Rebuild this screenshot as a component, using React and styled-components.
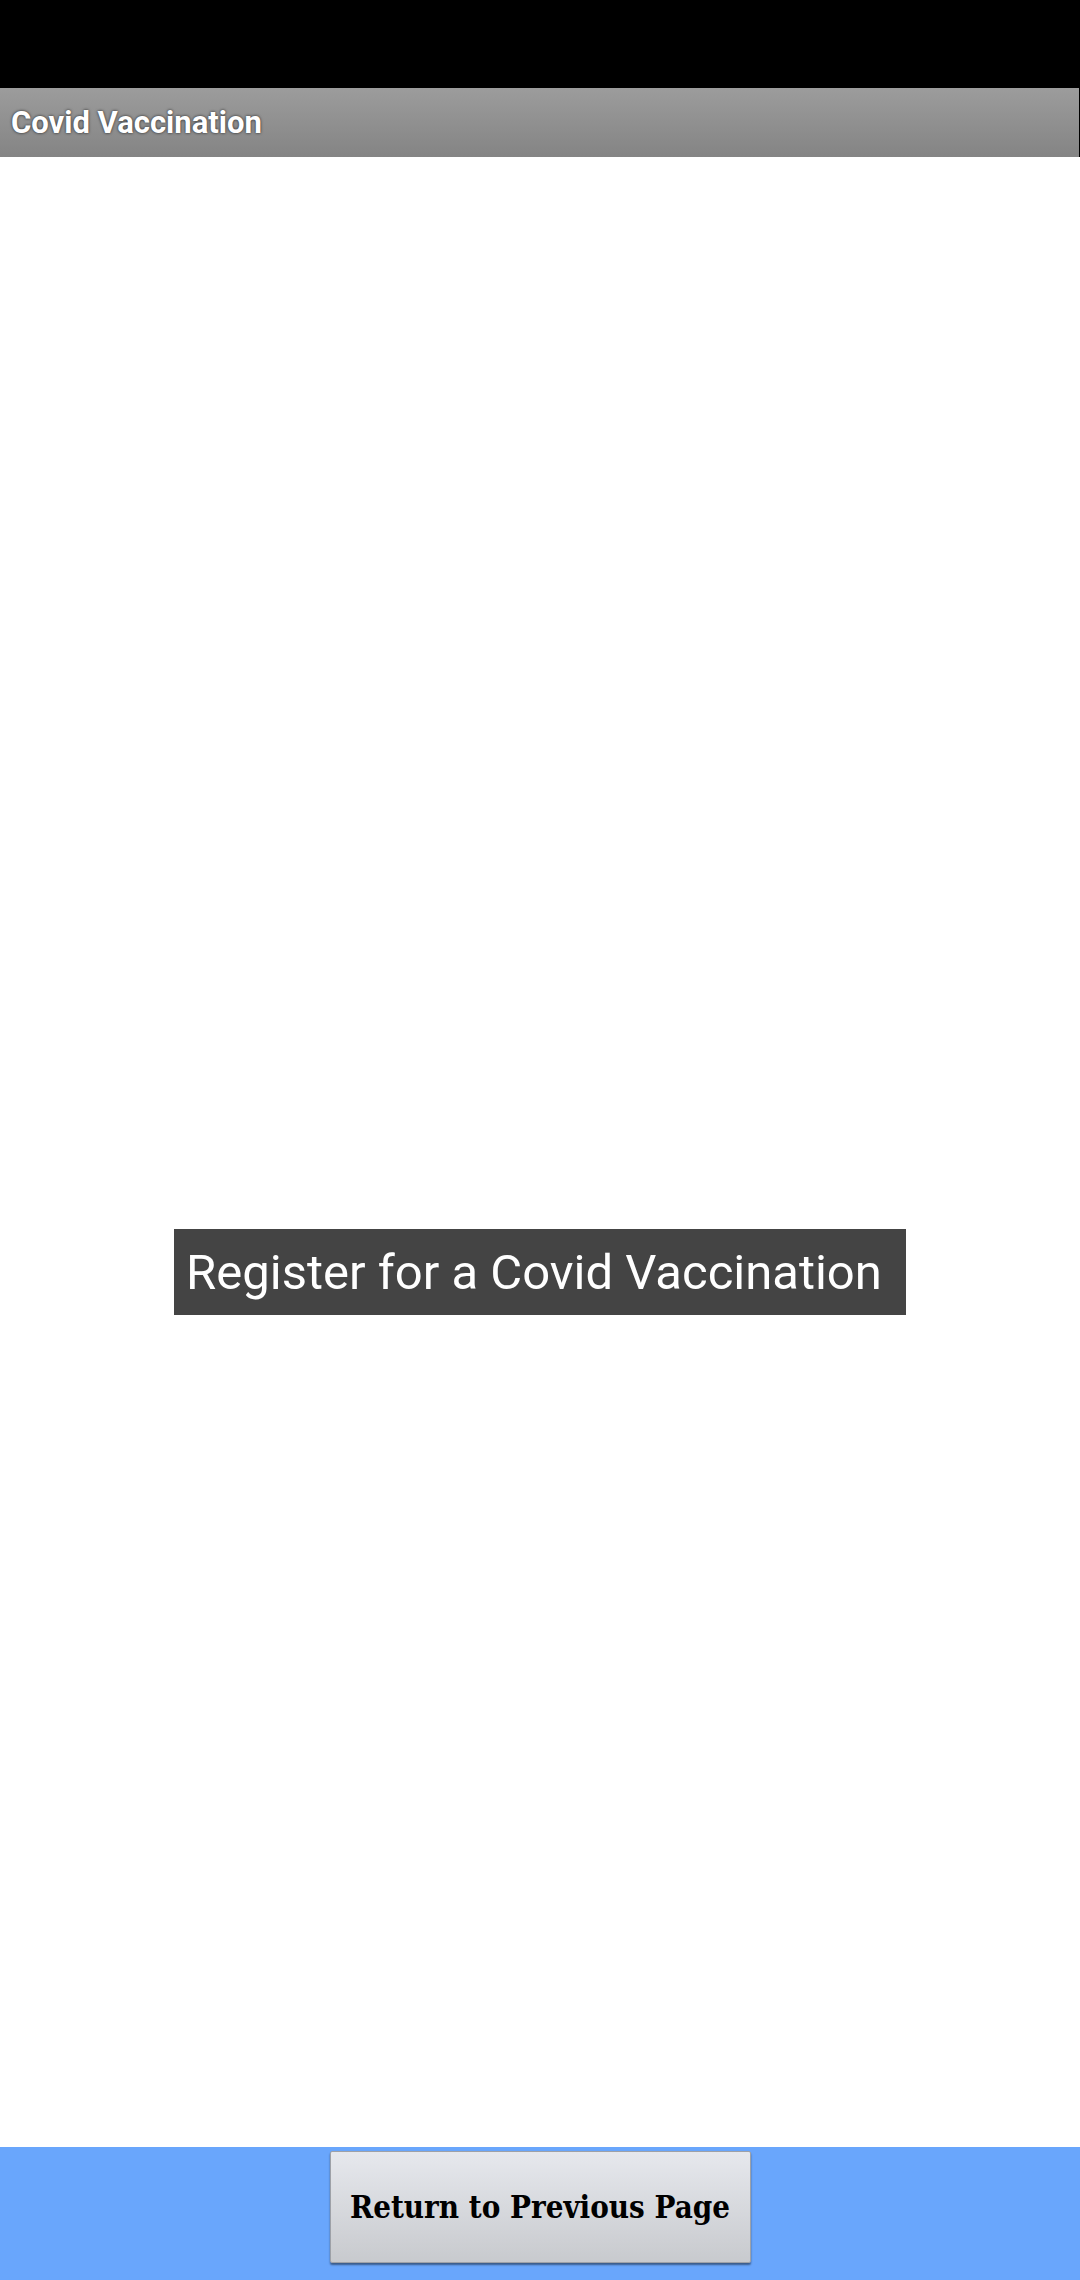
import React from "react";
import styled, { createGlobalStyle } from "styled-components";

const Global = createGlobalStyle`
  html, body {
    margin: 0;
    padding: 0;
    background: #ffffff;
  }
  #root {
    width: 1080px;
    height: 2280px;
  }
`;

const Screen = styled.div`
  display: flex;
  flex-direction: column;
  width: 1080px;
  height: 2280px;
  background: #ffffff;
`;

const StatusBar = styled.div`
  height: 88px;
  background: #000000;
  flex: none;
`;

const TitleBar = styled.div`
  display: flex;
  align-items: center;
  height: 69px;
  flex: none;
  padding-left: 11px;
  background: linear-gradient(#9c9c9c, #848484);
  border-right: 1px solid #000;
`;

const Title = styled.h1`
  margin: 0;
  font-family: Roboto, "Liberation Sans", sans-serif;
  font-weight: 700;
  font-size: 31px;
  color: #ffffff;
  text-shadow: 0 0 3px rgba(0, 0, 0, 0.8);
`;

const Content = styled.main`
  flex: 1;
  display: flex;
  flex-direction: column;
  align-items: center;
  padding-top: 1072px;
`;

const Label = styled.div`
  height: 86px;
  display: flex;
  align-items: center;
  padding: 0 24px 0 12px;
  background: #444444;
  color: #ffffff;
  font-family: Roboto, "Liberation Sans", sans-serif;
  font-size: 49px;
`;

const BottomBar = styled.footer`
  flex: none;
  height: 133px;
  display: flex;
  justify-content: center;
  align-items: flex-start;
  padding-top: 4px;
  box-sizing: border-box;
  background: #69a6fc;
`;

const Button = styled.button`
  width: 421px;
  height: 112px;
  padding: 0;
  border: 1px solid #9ea1a7;
  border-radius: 2px;
  background: linear-gradient(#e6e8ed, #c8cace);
  box-shadow: 0 2px 2px rgba(0, 0, 0, 0.45);
  font-family: "DejaVu Serif Condensed", "DejaVu Serif", serif;
  font-stretch: condensed;
  font-weight: 700;
  font-size: 31px;
  white-space: nowrap;
  color: #000000;
`;

export default function App() {
  return (
    <Screen>
      <Global />
      <StatusBar />
      <TitleBar>
        <Title>Covid Vaccination</Title>
      </TitleBar>
      <Content>
        <Label>Register for a Covid Vaccination</Label>
      </Content>
      <BottomBar>
        <Button>Return to Previous Page</Button>
      </BottomBar>
    </Screen>
  );
}
